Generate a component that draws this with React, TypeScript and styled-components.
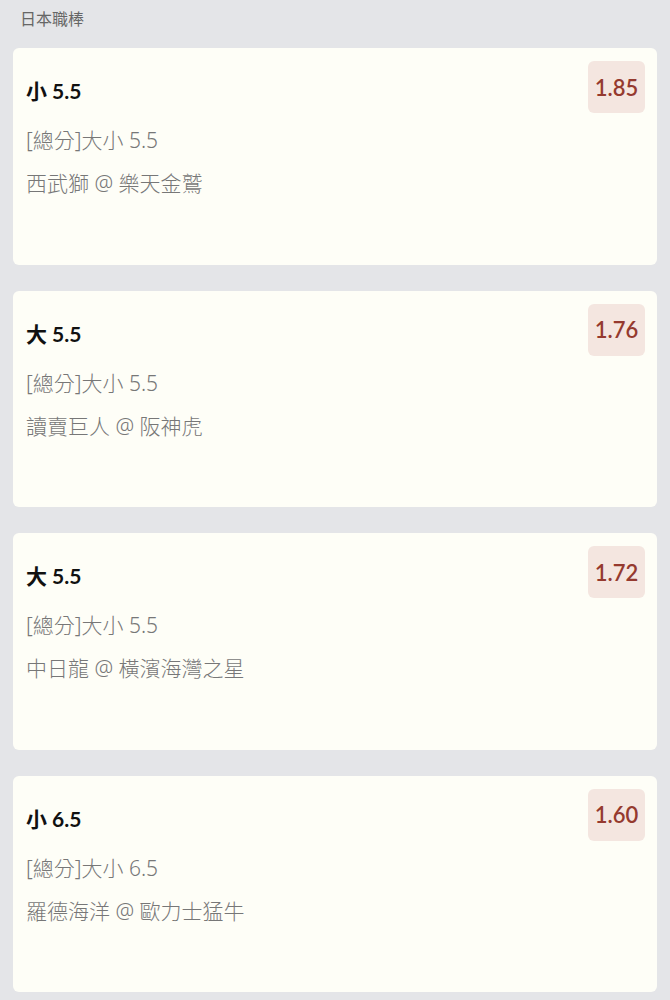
import React from 'react';
import styled, { createGlobalStyle } from 'styled-components';

const GlobalStyle = createGlobalStyle`
  body {
    margin: 0;
    background-color: #e4e5e8;
    font-family: Lato, "Noto Sans CJK TC", "Noto Sans", sans-serif;
  }
`;

const Page = styled.div`
  padding: 0 13px 20px;
`;

const SectionTitle = styled.div`
  padding: 8px 7px 0;
  font-size: 16px;
  line-height: 20px;
  color: #666;
  font-family: "Noto Sans CJK TC", sans-serif;
`;

const CardList = styled.div`
  display: flex;
  flex-direction: column;
  gap: 26px;
  margin-top: 20px;
`;

const Card = styled.div`
  height: 216.5px;
  box-sizing: border-box;
  padding: 13px 12px 13px 13px;
  background-color: #fefef7;
  border-radius: 6px;
`;

const TopRow = styled.div`
  display: flex;
  justify-content: space-between;
  align-items: flex-start;
`;

const Pick = styled.div`
  margin-top: 18px;
  font-size: 21px;
  line-height: 24px;
  font-weight: 700;
  color: #111;
`;

const Odds = styled.div`
  width: 57px;
  height: 52px;
  display: flex;
  align-items: center;
  justify-content: center;
  border-radius: 6px;
  background-color: #f4e6e0;
  color: #953a2f;
  font-size: 22px;
  font-weight: 600;
`;

const Details = styled.div`
  margin-top: 6px;
  font-family: "Noto Sans", "Noto Sans CJK TC", sans-serif;
  font-size: 21px;
  font-weight: 300;
  line-height: 43px;
  color: #777;
`;

interface Bet {
  id: number;
  pick: string;
  market: string;
  match: string;
  odds: string;
}

const bets: Bet[] = [
  { id: 1, pick: '小 5.5', market: '[總分]大小 5.5', match: '西武獅 @ 樂天金鷲', odds: '1.85' },
  { id: 2, pick: '大 5.5', market: '[總分]大小 5.5', match: '讀賣巨人 @ 阪神虎', odds: '1.76' },
  { id: 3, pick: '大 5.5', market: '[總分]大小 5.5', match: '中日龍 @ 橫濱海灣之星', odds: '1.72' },
  { id: 4, pick: '小 6.5', market: '[總分]大小 6.5', match: '羅德海洋 @ 歐力士猛牛', odds: '1.60' },
];

const App: React.FC = () => {
  return (
    <Page>
      <GlobalStyle />
      <SectionTitle>日本職棒</SectionTitle>
      <CardList>
        {bets.map(bet => (
          <Card key={bet.id}>
            <TopRow>
              <Pick>{bet.pick}</Pick>
              <Odds>{bet.odds}</Odds>
            </TopRow>
            <Details>
              <div>{bet.market}</div>
              <div>{bet.match}</div>
            </Details>
          </Card>
        ))}
      </CardList>
    </Page>
  );
};

export default App;
